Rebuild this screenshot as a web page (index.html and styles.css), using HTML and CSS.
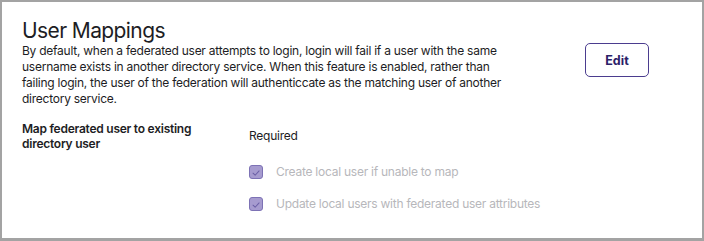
FILE: index.html
```html
<!DOCTYPE html>
<html lang="en">
<head>
    <meta charset="UTF-8">
    <title>User Mappings</title>
    <link rel="stylesheet" href="styles.css">
</head>
<body>
    <section class="panel">
        <div class="panel-head">
            <div class="panel-intro">
                <h2>User Mappings</h2>
                <p>By default, when a federated user attempts to login, login will fail if a user with the same username exists in another directory service. When this feature is enabled, rather than failing login, the user of the federation will authenticcate as the matching user of another directory service.</p>
            </div>
            <button class="edit-btn">Edit</button>
        </div>

        <div class="setting">
            <div class="setting-label">Map federated user to existing directory user</div>
            <div class="setting-value">
                <div class="value-text">Required</div>
                <label class="check">
                    <span class="check-box">
                        <svg viewBox="0 0 14 14" width="14" height="14"><path d="M3.5 7.2 L6 9.6 L10.6 4.6" fill="none" stroke="#6b5fa6" stroke-width="1.2" stroke-linecap="round" stroke-linejoin="round"/></svg>
                    </span>
                    Create local user if unable to map
                </label>
                <label class="check">
                    <span class="check-box">
                        <svg viewBox="0 0 14 14" width="14" height="14"><path d="M3.5 7.2 L6 9.6 L10.6 4.6" fill="none" stroke="#6b5fa6" stroke-width="1.2" stroke-linecap="round" stroke-linejoin="round"/></svg>
                    </span>
                    Update local users with federated user attributes
                </label>
            </div>
        </div>
    </section>
</body>
</html>
```

FILE: styles.css
```css
* {
    margin: 0;
    padding: 0;
    box-sizing: border-box;
}

:root {
    --text: #1d1d24;
    --muted: #b7b7bb;
    --purple: #4b3d8f;
    --purple-dark: #2b2168;
    --check-fill: #a69bcf;
    --frame: #a3a3a3;
}

body {
    font-family: Inter, "Noto Sans", sans-serif;
    color: var(--text);
    background: #fff;
}

.panel {
    width: 704px;
    height: 241px;
    border: 2px solid var(--frame);
    border-bottom-width: 3px;
    padding: 17px 20px 0 20px;
    font-size: 12px;
    letter-spacing: -0.25px;
}

/* Header */
.panel-head {
    display: flex;
    align-items: flex-start;
}

.panel-intro {
    width: 482px;
}

.panel-intro h2 {
    font-size: 21px;
    font-weight: 400;
    line-height: 24px;
    letter-spacing: -0.6px;
}

.panel-intro p {
    line-height: 16px;
    margin-top: 0;
}

.edit-btn {
    margin-left: auto;
    margin-right: 33px;
    margin-top: 24px;
    width: 64px;
    height: 34px;
    background: #fff;
    border: 1.5px solid var(--purple);
    border-radius: 5px;
    color: var(--purple-dark);
    font-family: inherit;
    font-size: 12.5px;
    font-weight: 700;
}

/* Setting row */
.setting {
    display: flex;
    margin-top: 14px;
}

.setting-label {
    width: 227px;
    font-weight: 600;
    line-height: 15px;
    padding-right: 30px;
}

.value-text {
    margin-top: 7px;
    line-height: 16px;
}

.check {
    display: flex;
    align-items: center;
    gap: 13px;
    color: var(--muted);
    margin-top: 20px;
    line-height: 16px;
}

.check-box {
    width: 14px;
    height: 14px;
    border: 1px solid #7d72b5;
    border-radius: 3px;
    background: var(--check-fill);
    display: flex;
}

.check + .check {
    margin-top: 16px;
}
```
